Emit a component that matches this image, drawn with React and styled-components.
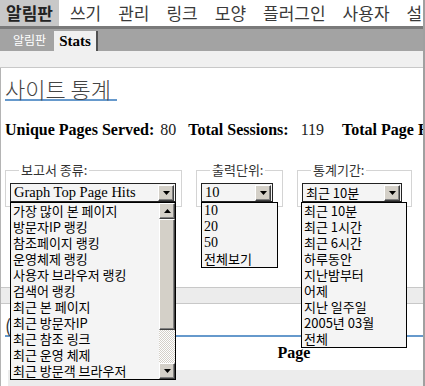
import React from "react";
import styled, { createGlobalStyle } from "styled-components";

const KR = `"Noto Sans CJK KR", "Liberation Sans", sans-serif`;
const SERIF = `"Liberation Serif", "DejaVu Serif", serif`;

const GlobalStyle = createGlobalStyle`
  html, body {
    margin: 0;
    padding: 0;
    background: #fff;
    overflow: hidden;
  }
  body {
    font-family: ${KR};
  }
`;

const navItems = ["알림판", "쓰기", "관리", "링크", "모양", "플러그인", "사용자", "설정"];

const reportTypes = [
	"가장 많이 본 페이지",
	"방문자IP 랭킹",
	"참조페이지 랭킹",
	"운영체제 랭킹",
	"사용자 브라우저 랭킹",
	"검색어 랭킹",
	"최근 본 페이지",
	"최근 방문자IP",
	"최근 참조 링크",
	"최근 운영 체제",
	"최근 방문객 브라우저",
];

const units = ["10", "20", "50", "전체보기"];

const periods = [
	"최근 10분",
	"최근 1시간",
	"최근 6시간",
	"하루동안",
	"지난밤부터",
	"어제",
	"지난 일주일",
	"2005년 03월",
	"전체",
];

const stats = [
	{ label: "Unique Pages Served:", value: "80", pad: 2, gap: 12 },
	{ label: "Total Sessions:", value: "119", pad: 8, gap: 18 },
	{ label: "Total Page Hits:", value: "377", pad: 2, gap: 0 },
];

const Arrow = ({ up }) => (
	<svg width="7" height="4" viewBox="0 0 7 4">
		<path d={up ? "M0 4 L7 4 L3.5 0 Z" : "M0 0 L7 0 L3.5 4 Z"} fill="#000" />
	</svg>
);

const Dropdown = ({ label, width, sizes, value, items, serif, scroll }) => (
	<Fieldset $width={width}>
		<Legend>{label}</Legend>
		<SelectWrap>
			<Select $width={sizes.select}>
				<SelectText $serif={serif}>{value}</SelectText>
				<Button3D>
					<Arrow />
				</Button3D>
			</Select>
			<List $width={sizes.list} $left={sizes.left}>
				<ListItems>
					{items.map((item, i) => (
						<ListItem key={i} $serif={serif && /^\d+$/.test(item)}>
							{item}
						</ListItem>
					))}
				</ListItems>
				{scroll && (
					<Scrollbar>
						<ScrollButton>
							<Arrow up />
						</ScrollButton>
						<Thumb />
						<Track />
						<ScrollButton>
							<Arrow />
						</ScrollButton>
					</Scrollbar>
				)}
			</List>
		</SelectWrap>
	</Fieldset>
);

const App = () => {
	return (
		<>
			<GlobalStyle />
			<Page>
				<TopNav>
					{navItems.map((item, i) => (
						<NavItem key={item} $active={i === 0}>
							{item}
						</NavItem>
					))}
				</TopNav>
				<SubNav>
					<SubLink>알림판</SubLink>
					<SubTab>Stats</SubTab>
				</SubNav>
				<Strip />
				<Main>
					<Top>
						<div>
							<Title>사이트 통계</Title>
						</div>
						<StatsLine>
							{stats.map((s) => (
								<StatItem key={s.label} $gap={s.gap}>
									<b>{s.label}</b>
									<StatValue $pad={s.pad}>{s.value}</StatValue>
								</StatItem>
							))}
						</StatsLine>
						<Filters>
							<Dropdown
								label="보고서 종류:"
								width={177}
								sizes={{ select: 166, list: 166, left: 0 }}
								value="Graph Top Page Hits"
								items={reportTypes}
								serif
								scroll
							/>
							<Dropdown
								label="출력단위:"
								width={87}
								sizes={{ select: 72, list: 77, left: 0 }}
								value="10"
								items={units}
								serif
							/>
							<Dropdown
								label="통계기간:"
								width={115}
								sizes={{ select: 100, list: 106, left: -1 }}
								value="최근 10분"
								items={periods}
							/>
						</Filters>
					</Top>
					<Band />
					<SectionTitle>(순위)</SectionTitle>
					<HeaderRow>
						<span />
						<HeaderCell>Page</HeaderCell>
					</HeaderRow>
					<DataRow>
						<RowLink>TWDT</RowLink>
					</DataRow>
				</Main>
			</Page>
		</>
	);
};

export default App;

const Page = styled.div`
	width: 425px;
	height: 386px;
	box-sizing: border-box;
	border-right: 2px solid #a0a0a0;
	display: flex;
	flex-direction: column;
	overflow: hidden;
`;

const TopNav = styled.nav`
	display: flex;
	gap: 5px;
	height: 26px;
	border-bottom: 3px solid #7a7a7a;
	white-space: nowrap;
	overflow: hidden;
	flex-shrink: 0;
`;

const NavItem = styled.a`
	padding: 0 6px;
	line-height: 26px;
	font-size: 17px;
	color: ${(p) => (p.$active ? "#222" : "#3a3a3a")};
	font-weight: ${(p) => (p.$active ? 700 : 400)};
	background: ${(p) => (p.$active ? "#c8c8c8" : "transparent")};
`;

const SubNav = styled.div`
	display: flex;
	align-items: flex-end;
	height: 22px;
	padding-left: 8px;
	background: #a3a3a3;
	flex-shrink: 0;
`;

const SubLink = styled.a`
	align-self: center;
	padding: 0 5px;
	font-size: 12px;
	line-height: 20px;
	color: #fff;
`;

const SubTab = styled.a`
	margin-left: 3px;
	padding: 0 5px;
	height: 20px;
	line-height: 21px;
	background: #f0f0f0;
	border-right: 2px solid #505050;
	font-family: ${SERIF};
	font-weight: 700;
	font-size: 15px;
	color: #000;
`;

const Strip = styled.div`
	height: 16px;
	background: #f0f0f0;
	border-bottom: 1px solid #c8c8c8;
	flex-shrink: 0;
`;

const Main = styled.main`
	flex: 1;
	border-left: 1px solid #b4b4b4;
	overflow: hidden;
`;

const Top = styled.section`
	padding: 0 4px;
`;

const Title = styled.h2`
	display: inline-block;
	margin: 9px 0 0;
	padding-right: 6px;
	font-size: 22px;
	font-weight: 300;
	line-height: 22px;
	color: #444;
	border-bottom: 2px solid #6699cc;
`;

const StatsLine = styled.div`
	margin-top: 18px;
	font-family: ${SERIF};
	font-size: 16px;
	line-height: 18px;
	white-space: nowrap;
	color: #000;
`;

const StatItem = styled.span`
	margin-right: ${(p) => p.$gap}px;
`;

const StatValue = styled.span`
	margin-left: ${(p) => p.$pad + 4}px;
	color: #222;
`;

const Filters = styled.div`
	display: flex;
	align-items: flex-start;
	gap: 14px;
	margin-top: 23px;
`;

const Fieldset = styled.fieldset`
	position: relative;
	box-sizing: border-box;
	width: ${(p) => p.$width}px;
	min-width: 0;
	margin: 0;
	padding: 0 4px 4px;
	border: 1px solid #d4d4d4;
`;

const Legend = styled.legend`
	margin-left: 9px;
	padding: 0 2px;
	font-size: 13px;
	line-height: 16px;
	color: #333;
`;

const SelectWrap = styled.div`
	position: relative;
	margin-top: 5px;
`;

const Select = styled.div`
	display: flex;
	align-items: center;
	box-sizing: border-box;
	width: ${(p) => p.$width}px;
	height: 19px;
	border: 1px solid #222;
	background: #f4f4f4;
`;

const SelectText = styled.span`
	flex: 1;
	padding-left: 3px;
	font-family: ${(p) => (p.$serif ? SERIF : KR)};
	font-size: ${(p) => (p.$serif ? "14.5px" : "13px")};
	white-space: nowrap;
	color: #000;
`;

const Button3D = styled.div`
	display: flex;
	align-items: center;
	justify-content: center;
	box-sizing: border-box;
	width: 16px;
	height: 16px;
	margin-right: 1px;
	background: #d4d0c8;
	border: 1px solid;
	border-color: #fff #404040 #404040 #fff;
	box-shadow: inset -1px -1px 0 #808080;
`;

const List = styled.div`
	position: absolute;
	top: 19px;
	left: ${(p) => p.$left}px;
	z-index: 2;
	display: flex;
	box-sizing: border-box;
	width: ${(p) => p.$width}px;
	border: 1px solid #000;
	background: #f4f4f4;
`;

const ListItems = styled.div`
	flex: 1;
	min-width: 0;
	padding-left: 2px;
`;

const ListItem = styled.div`
	height: 16px;
	line-height: 16px;
	font-family: ${(p) => (p.$serif ? SERIF : KR)};
	font-size: ${(p) => (p.$serif ? "14px" : "13px")};
	white-space: nowrap;
	color: #000;
`;

const Scrollbar = styled.div`
	display: flex;
	flex-direction: column;
	width: 16px;
`;

const ScrollButton = styled(Button3D)`
	margin: 0;
	flex: 0 0 16px;
`;

const Thumb = styled.div`
	flex: 0 0 111px;
	box-sizing: border-box;
	background: #d4d0c8;
	border: 1px solid;
	border-color: #fff #404040 #404040 #fff;
	box-shadow: inset -1px -1px 0 #808080;
`;

const Track = styled.div`
	flex: 1;
	background: repeating-conic-gradient(#d4d0c8 0 25%, #fff 0 50%) 0 0 / 2px 2px;
`;

const Band = styled.div`
	height: 15px;
	margin-top: 80px;
	background: #ececec;
	border-top: 1px solid #c8c8c8;
	border-bottom: 1px solid #c8c8c8;
`;

const SectionTitle = styled.h3`
	margin: 11px 0 0 4px;
	font-size: 18px;
	font-weight: 400;
	line-height: 20px;
	color: #333;
	border-bottom: 2px solid #6699cc;
`;

const HeaderRow = styled.div`
	display: grid;
	grid-template-columns: 160px 1fr;
	height: 32px;
	align-items: center;
	margin-left: 4px;
`;

const HeaderCell = styled.div`
	text-align: center;
	font-family: ${SERIF};
	font-weight: 700;
	font-size: 16px;
	color: #000;
`;

const DataRow = styled.div`
	margin: 1px 0 0 7px;
	padding: 6px 4px 0;
	height: 20px;
	background: #ececec;
`;

const RowLink = styled.a`
	font-family: "DejaVu Sans Mono", monospace;
	font-size: 12px;
	color: #2244aa;
`;
